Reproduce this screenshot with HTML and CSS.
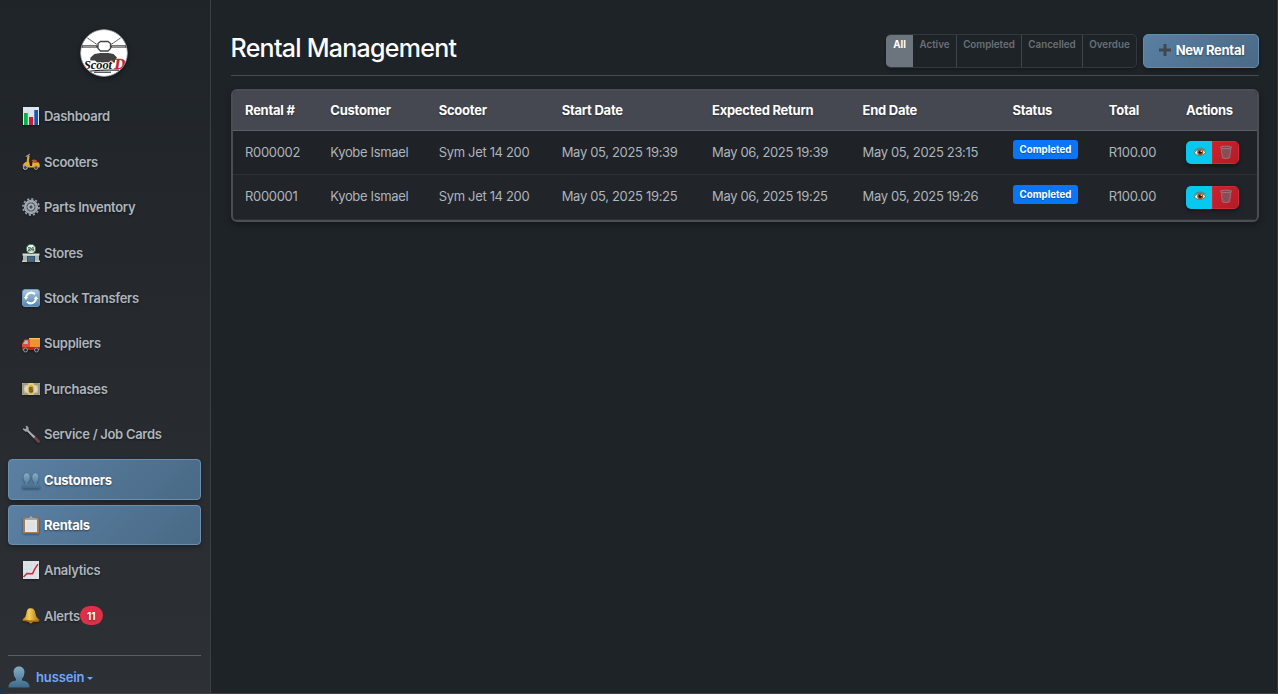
FILE: index.html
```html
<!DOCTYPE html>
<html lang="en">
<head>
<meta charset="utf-8">
<title>Rental Management</title>
<link rel="stylesheet" href="styles.css">
</head>
<body>
<svg class="defs" aria-hidden="true">
  <defs>
    <linearGradient id="steel" x1="0" y1="0" x2="0" y2="1"><stop offset="0" stop-color="#85adc5"/><stop offset="1" stop-color="#3c6a8b"/></linearGradient>
    <linearGradient id="sky" x1="0" y1="0" x2="0" y2="1"><stop offset="0" stop-color="#a6c7df"/><stop offset="1" stop-color="#5584aa"/></linearGradient>
    <linearGradient id="gold" x1="0" y1="0" x2="1" y2="0"><stop offset="0" stop-color="#c98912"/><stop offset=".4" stop-color="#f3cf5c"/><stop offset="1" stop-color="#a8690d"/></linearGradient>
    <symbol id="eye" viewBox="0 0 14 12"><path d="M1 7Q6.500 0 13 6.300Q7 12.500 1 7Z" fill="#f4eee4" stroke="#6e553b" stroke-width=".7"/><circle cx="7.200" cy="6.300" r="3" fill="#96582b"/><circle cx="7.200" cy="6.300" r="1.500" fill="#171311"/><circle cx="8.200" cy="5.200" r=".7" fill="#fff"/><path d="M1.500 4.500Q6 0 12.500 3.700" fill="none" stroke="#816e5c" stroke-width=".9"/></symbol>
    <symbol id="trash" viewBox="0 0 14 14"><path d="M2 2.500L3.400 13Q7 14.200 10.600 13L12 2.500Z" fill="#91535a" stroke="#a47177" stroke-width=".8"/><path d="M4 3l5.800 9M6.500 3l3.800 6M3.200 5.500l4.300 7M10 3l-5.800 9M7.500 3L3.700 9M10.800 5.500l-4.300 7" stroke="#7d474e" stroke-width=".5"/><ellipse cx="7" cy="2.300" rx="5.700" ry="1.200" fill="#76494e" stroke="#a58186" stroke-width=".8"/></symbol>
  </defs>
</svg>
<div class="app">
  <aside class="sidebar">
    <div class="brand">
      <svg class="logo" viewBox="0 0 48 48">
        <defs><clipPath id="round"><circle cx="24" cy="24" r="23.500"/></clipPath></defs>
        <g clip-path="url(#round)">
          <circle cx="24" cy="24" r="24" fill="#fff"/>
          <path d="M6 8l11 7.500M42 8l-11 7.500" stroke="#444" stroke-width="1" stroke-dasharray="2 .5"/>
          <path d="M0 17.500h19M29 17.500h19" stroke="#444" stroke-width="2.600"/><path d="M3 17.800h13M32 17.800h13" stroke="#ccc" stroke-width=".9"/>
          <path d="M20.500 12.500h7.500l2.500 2v5L28 22h-7.500L18 19.500v-5Z" fill="#fff" stroke="#444" stroke-width="1.300"/>
          <path d="M10.500 28.500l4-3.500 6-1h8l5 1 3.500 3.500-2 3v2h-18l-2-2h-5Z" fill="#414141"/>
          <text class="logo-script" x="4" y="40" textLength="28" lengthAdjust="spacingAndGlyphs">Scoot</text>
          <text class="logo-letter" x="34.500" y="39.500">D</text>
          <path d="M6 42.800q12-2.200 33-1.600M14 43.200h17" fill="none" stroke="#111" stroke-width="1"/>
        </g>
        <circle cx="24" cy="24" r="23.500" fill="none" stroke="#878b90"/>
      </svg>
    </div>
    <nav class="menu">
      <a class="item"><svg class="icon" viewBox="0 0 18 18"><path d="M1 0h16v18H1Z" fill="#dfe7ed"/><path d="M1 5h16M1 9h16M1 13h16M6 0v18M12 0v18" stroke="#c9d5de" stroke-width=".5"/><path d="M2 6h3.800v12H2Z" fill="#08b344"/><path d="M7 10h4v8H7Z" fill="#c51f32"/><path d="M12.300 3H16v15h-3.700Z" fill="#1857b0"/></svg>Dashboard</a>
      <a class="item"><svg class="icon" viewBox="0 0 18 18"><path d="M6.500 2.500L5.800 8l1 4.500" fill="none" stroke="#e0a62c" stroke-width="2.200"/><path d="M3.800 3.500l2-.8 2-1.700" fill="none" stroke="#91979a" stroke-width="1.300"/><path d="M.5 13Q2 8.500 6 8.500L8 13h2l.5-4H16q2.500 2 1.500 5.500H6Q5 11.500.5 13Z" fill="#eaae2b"/><path d="M9.500 7.300q3-1.500 5 .2l1.500 2.500h-4Z" fill="#b8542d"/><circle cx="3.300" cy="14.500" r="2" fill="#41464b" stroke="#b9bfc3"/><circle cx="14" cy="14.700" r="1.800" fill="#41464b" stroke="#9e8d68"/></svg>Scooters</a>
      <a class="item"><svg class="icon" viewBox="0 0 18 18"><circle cx="9" cy="9" r="8" fill="none" stroke="#969ca4" stroke-width="1.800" stroke-dasharray="2.200 1.989"/><circle cx="9" cy="9" r="5.900" fill="#585e65" stroke="#a1a7af" stroke-width="2.500"/><circle cx="9" cy="9" r="2.400" fill="#444a50" stroke="#b5bbc1" stroke-width="1.500"/><path d="M9 4v2.500M9 11.500V14M4 9h2.500M11.500 9H14" stroke="#8f969d"/></svg>Parts Inventory</a>
      <a class="item"><svg class="icon" viewBox="0 0 18 18"><path d="M1 10h16v7H1Z" fill="#a9b6b8"/><path d="M0 16.500h5V18H0ZM13 16.500h5V18h-5Z" fill="#d7ceb5"/><path d="M5 12h8v6H5Z" fill="#325066"/><path d="M7 12.500V18M9 12.500V18M11 12.500V18" stroke="#75a6bd" stroke-width=".6"/><path d="M.5 9.500h17v2H.5Z" fill="#d9dcd2"/><circle cx="9" cy="5" r="4.700" fill="#f3f5ed" stroke="#397a56"/><text class="tiny" x="5.700" y="7.100">24</text></svg>Stores</a>
      <a class="item"><svg class="icon" viewBox="0 0 18 18"><rect x=".5" y=".5" width="17" height="17" rx="2.500" fill="url(#sky)" stroke="#739bbb"/><path d="M4 8.500A5.300 5.300 0 0 1 13 5.200M14 9.500A5.300 5.300 0 0 1 5 12.800" fill="none" stroke="#fff" stroke-width="2"/><path d="M1.800 8h4.400L4 11ZM11.800 10h4.400L14 7Z" fill="#fff"/></svg>Stock Transfers</a>
      <a class="item"><svg class="icon low" viewBox="0 0 18 18"><path d="M7 2h11v10H7Z" fill="#ef942c"/><path d="M7 2h11v1.200H7Z" fill="#ffc064"/><path d="M0 8l2.500-4.500H8V12H0Z" fill="#e44b38"/><path d="M1.300 8l2-3.500h2.500V8Z" fill="#91c8da"/><path d="M0 11h18v3H0Z" fill="#be2020"/><circle cx="3.500" cy="14" r="2" fill="#292d31" stroke="#92979a"/><circle cx="14.500" cy="14" r="2" fill="#292d31" stroke="#92979a"/></svg>Suppliers</a>
      <a class="item"><svg class="icon" viewBox="0 0 18 18"><path d="M0 3h18v12H0Z" fill="#b9b798"/><path d="M1 4h16v10H1Z" fill="none" stroke="#858773"/><ellipse cx="9" cy="9" rx="6.800" ry="4.500" fill="#ded9bd"/><path d="M6.300 3h5.400v12H6.300Z" fill="#ebcf7d"/><ellipse cx="9" cy="9" rx="2.700" ry="4" fill="#dcad38"/><text class="money" x="6.700" y="11.900">$</text></svg>Purchases</a>
      <a class="item"><svg class="icon" viewBox="0 0 18 18"><path d="M11 10.500l5.500 6" stroke="#6d4548" stroke-width="2.800" stroke-linecap="round"/><path d="M4.500 4.500l8 8" stroke="#a9b1b5" stroke-width="2"/><path d="M3.500.8q3.500.2 3.200 3.400Q6 7 3.500 6.700L.8 4.500 1 3.300l2.500.7.8-1Z" fill="#9ca4a9"/></svg>Service / Job Cards</a>
      <a class="item active"><svg class="icon low" viewBox="0 0 18 18"><path d="M1.500 5.500C1.500-.2 7.800-.2 7.800 5.500q0 3-1.700 5v1.200q2.500.3 2.900 2 .4-1.700 2.900-2v-1.200q-1.700-2-1.700-5C10.200-.2 16.500-.2 16.500 5.500q0 3-1.700 5v1.200q3.200.5 3.200 4.800H0q0-4.300 3.200-4.800v-1.200q-1.700-2-1.700-5" fill="url(#steel)"/></svg>Customers</a>
      <a class="item active"><svg class="icon" viewBox="0 0 18 18"><rect x="1" y="1.500" width="16" height="16" rx="1" fill="#a97c50"/><path d="M3 3.500h12V16H3Z" fill="#e5e6e7"/><path d="M5 7h8M5 9h8M5 11h8M5 13h8" stroke="#d0d2d5" stroke-width=".5"/><path d="M4.500 4V2h3L8 .3h2l.5 1.700h3v2Z" fill="#a2a7aa"/></svg>Rentals</a>
      <a class="item"><svg class="icon" viewBox="0 0 18 18"><path d="M1 0h16v18H1Z" fill="#dee5e9"/><path d="M1 4h16M1 8h16M1 12h16M5 0v18M9 0v18M13 0v18" stroke="#cbd5dc" stroke-width=".5"/><path d="M1.500 16l3.500-3.500 5.500.2 2.500-5 3-4.500" fill="none" stroke="#c92c3a" stroke-width="1.500"/></svg>Analytics</a>
      <a class="item"><svg class="icon" viewBox="0 0 18 18"><path d="M8.500 1.200Q12.800 1 13.500 6.500 14 10.500 17.500 12.500 17.500 15 14 14.500L1 14Q0 13 1 12 4 10 4.300 6.500 4.800 1 8.500 1.200Z" fill="url(#gold)"/><path d="M1 12.500q8 1.500 16.300.8v1.200q-8 1.500-16.300-.8Z" fill="#a4650d"/><path d="M6.500 14.500h4.500q-.5 2-2.200 2t-2.300-2" fill="#bd7a16"/></svg>Alerts<span class="count">11</span></a>
    </nav>
    <div class="user">
      <svg class="avatar" viewBox="0 0 22 22"><path d="M5.500 6C5.500-1.500 16.500-1.500 16.500 6q0 4.500-2.500 7v1.500q7.500.5 7.500 7H.5q0-6.500 7.500-7V13Q5.500 10.500 5.500 6Z" fill="url(#steel)"/></svg>
      <span>hussein</span><i class="caret"></i>
    </div>
  </aside>
  <main class="main">
    <header class="top">
      <h1>Rental Management</h1>
      <div class="filters">
        <span class="filter all">All</span><span class="filter act">Active</span><span class="filter comp">Completed</span><span class="filter canc">Cancelled</span><span class="filter over">Overdue</span>
      </div>
      <button class="new"><svg class="plus" viewBox="0 0 12 12"><path d="M6 0v12M0 6h12" stroke="#41474d" stroke-width="3"/></svg>New Rental</button>
    </header>
    <div class="panel">
      <div class="row head"><span>Rental #</span><span>Customer</span><span>Scooter</span><span>Start Date</span><span>Expected Return</span><span>End Date</span><span>Status</span><span>Total</span><span>Actions</span></div>
      <div class="row first"><span>R000002</span><span>Kyobe Ismael</span><span>Sym Jet 14 200</span><span>May 05, 2025 19:39</span><span>May 06, 2025 19:39</span><span>May 05, 2025 23:15</span><span><b class="badge">Completed</b></span><span>R100.00</span><span><span class="actions"><button class="view"><svg viewBox="0 0 14 12"><use href="#eye"/></svg></button><button class="delete"><svg viewBox="0 0 14 14"><use href="#trash"/></svg></button></span></span></div>
      <div class="row second"><span>R000001</span><span>Kyobe Ismael</span><span>Sym Jet 14 200</span><span>May 05, 2025 19:25</span><span>May 06, 2025 19:25</span><span>May 05, 2025 19:26</span><span><b class="badge">Completed</b></span><span>R100.00</span><span><span class="actions"><button class="view"><svg viewBox="0 0 14 12"><use href="#eye"/></svg></button><button class="delete"><svg viewBox="0 0 14 14"><use href="#trash"/></svg></button></span></span></div>
    </div>
  </main>
</div>
</body>
</html>
```
FILE: styles.css
```css
* { box-sizing: border-box; }
body { margin: 0; background: #173652; color: #adb5bd; font-family: Inter, "Liberation Sans", sans-serif; font-size: 13px; }
button { font: inherit; margin: 0; padding: 0; border: 0; }
.defs { display: block; width: 0; height: 0; }
.app { display: flex; width: 1278px; height: 694px; overflow: hidden; background: #1e2327; border-right: 1px solid #34383c; border-bottom: 1px solid #3d4145; border-bottom-left-radius: 9px; }
.sidebar { width: 211px; flex: none; padding: 29px 9px 0 8px; background: linear-gradient(180deg, #1f2428, #2d3035); border-right: 1px solid #3b3f44; }
.brand { display: flex; justify-content: center; height: 67.100px; margin-left: -1px; }
.logo { width: 48px; height: 48px; border-radius: 50%; box-shadow: 0 2px 5px rgba(0,0,0,.4); }
.logo-script { font: italic bold 12px "Liberation Serif", serif; fill: #111; stroke: #fff; stroke-width: 1.5px; paint-order: stroke; }
.logo-letter { font: italic bold 15px "Liberation Serif", serif; fill: #c81f31; stroke: #c81f31; stroke-width: .5px; }
.tiny { font: bold 6px "Liberation Sans", sans-serif; fill: #285b42; }
.money { font: bold 8px "Liberation Sans", sans-serif; fill: #6d5924; }
.menu { display: flex; flex-direction: column; gap: 5px; }
.item { display: flex; align-items: center; height: 40.420px; padding-left: 13px; border: 1px solid transparent; border-radius: 4px; font-size: 13px; font-weight: 600; letter-spacing: -.3px; text-shadow: 0 1px 2px rgba(0,0,0,.5); }
.icon { width: 18px; height: 18px; margin-right: 4px; flex: none; filter: drop-shadow(0 1px 1px rgba(0,0,0,.4)); }
.low { margin-top: 3px; }
.active { color: #fff; font-weight: 700; letter-spacing: -.22px; background: linear-gradient(135deg, #5b80a3, #496985); border-color: #6b8faf; box-shadow: 0 2px 4px rgba(0,0,0,.3); }
.count { display: grid; place-items: center; width: 23px; height: 19px; border-radius: 10px; background: #dc3148; color: #fff; font-size: 10px; font-weight: 700; letter-spacing: 0; }
.user { display: flex; align-items: center; height: 44px; margin-top: 18.860px; border-top: 1px solid #5b5f64; color: #6ea8fe; font-weight: 600; letter-spacing: -.12px; }
.avatar { width: 22px; height: 22px; margin-right: 6px; }
.caret { margin: 2px 0 0 3px; border: 3px solid transparent; border-top-color: #6ea8fe; border-bottom: 0; }
.main { flex: 1; padding: 33px 18px 0 20px; }
.top { display: flex; align-items: flex-start; height: 43px; padding-top: 1px; border-bottom: 1px solid #464b50; }
h1 { flex: 1; margin: -1px 0 0 -.500px; color: #fff; font-size: 25px; line-height: 31px; font-weight: 550; letter-spacing: -.73px; white-space: nowrap; }
.filters { display: flex; height: 34px; border: 1px solid #33383d; border-left: 0; border-radius: 5px; overflow: hidden; box-shadow: 0 2px 3px rgba(0,0,0,.25); }
.filter { padding-top: 4px; border-right: 1px solid #3f454a; color: #697077; text-align: center; font-size: 9.800px; line-height: 12px; font-weight: 600; }
.all { width: 27px; margin: -1px 0; padding-top: 5px; background: #6c757d; color: #fff; border: 0; font-weight: 700; }
.act { width: 44px; }
.comp { width: 65px; }
.canc { width: 61px; }
.over { width: 53px; border: 0; }
.new { display: flex; align-items: center; justify-content: center; width: 116px; height: 34px; margin-left: 6px; padding: 0 0 2px 1px; border: 1px solid #628cae; border-radius: 5px; background: linear-gradient(135deg, #597fa2, #4a6a86); color: #fff; font-size: 13px; font-weight: 700; letter-spacing: -.3px; text-shadow: 0 1px 2px rgba(0,0,0,.45); box-shadow: 0 2px 4px rgba(0,0,0,.3); }
.plus { width: 12px; height: 12px; margin-right: 5px; }
.panel { margin-top: 13px; border: 2px solid #4a4e53; border-radius: 6px; background: #212429; overflow: hidden; box-shadow: 0 3px 7px rgba(0,0,0,.3); }
.row { display: grid; grid-template-columns: 85.300px 108.400px 123px 150.300px 150.500px 150px 96.300px 77.200px 83px; align-items: center; height: 44px; }
.row > span { padding: 0 0 1px 12px; white-space: nowrap; }
.head { height: 40px; color: #fff; background: #454850; font-weight: 700; font-size: 13px; letter-spacing: -.25px; border-bottom: 1px solid #5b5f64; text-shadow: 0 1px 2px rgba(0,0,0,.4); }
.first { background: #1f2226; border-bottom: 1px solid #2d3135; letter-spacing: -.33px; }
.second { height: 45px; border-bottom: 1px solid #2d3135; letter-spacing: -.33px; }
.second > span { padding-bottom: 2px; }
.first > span:last-child, .second > span:last-child { padding-bottom: 0; }
.badge { display: grid; place-items: center; width: 65px; height: 19px; margin: -5px 0 0 .500px; border-radius: 3px; background: #0876f7; color: #fff; font-size: 9.700px; font-weight: 700; letter-spacing: 0; text-shadow: 0 1px 1px rgba(0,0,0,.3); }
.second .badge { margin-top: -4px; }
.actions { display: flex; width: 53px; height: 23px; border-radius: 5px; overflow: hidden; box-shadow: 0 2px 4px rgba(0,0,0,.4); }
.view, .delete { display: grid; place-items: center; padding-bottom: 2px; }
.view { width: 26px; padding-left: 2px; background: #08c8ef; }
.view svg { width: 14px; height: 12px; }
.delete { width: 27px; padding-left: 1px; background: linear-gradient(135deg, #cd202c, #b21c28); border: 1px solid #ca2c38; }
.delete svg { width: 14px; height: 14px; }
```
